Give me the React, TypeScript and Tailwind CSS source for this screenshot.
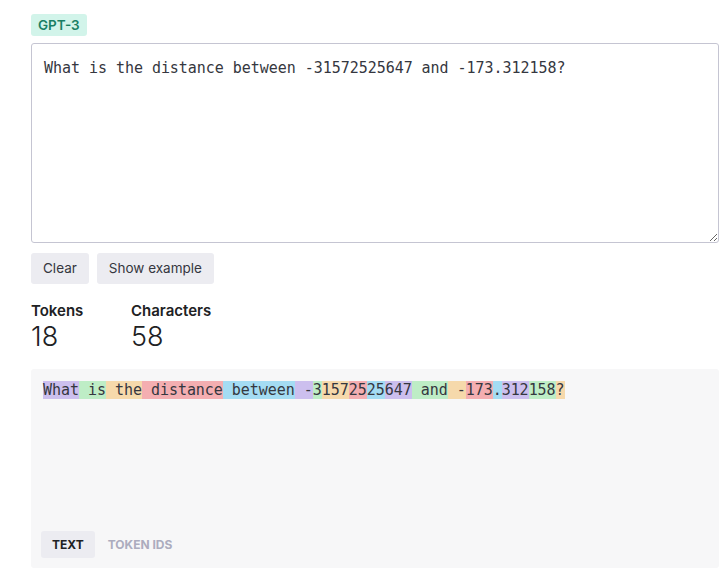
import React from "react";

const tokens = [
    "What", " is", " the", " distance", " between", " -", "3", "157", "25", "25", "647",
    " and", " -", "173", ".", "312", "158", "?",
];

const colors = [
    "bg-[rgba(107,64,216,0.3)]",
    "bg-[rgba(104,222,122,0.4)]",
    "bg-[rgba(244,172,54,0.4)]",
    "bg-[rgba(239,65,70,0.4)]",
    "bg-[rgba(39,181,234,0.4)]",
];

export default function App() {
    const [text, setText] = React.useState("What is the distance between -31572525647 and -173.312158?");
    const [tab, setTab] = React.useState("text");

    return (
        <div className="min-h-screen bg-white font-['Inter',sans-serif] text-[#353740]">
            <div className="pl-[31px] pt-[14px] w-[719px]">
                <div className="flex">
                    <div className="flex h-[22px] items-center rounded-[3px] bg-[#d2f4ea] px-[7px] text-[13.5px] font-semibold text-[#1a7f64]">
                        GPT-3
                    </div>
                </div>

                <textarea
                    className="mt-[7px] block h-[200px] w-[688px] rounded-[3px] border border-[#c5c5d2] bg-white px-[12px] py-[12px] font-['DejaVu_Sans_Mono',monospace] text-[15px] leading-[24px] tracking-[-0.04px] text-[#353740] outline-none"
                    value={text}
                    onChange={e => setText(e.target.value)}
                />

                <div className="mt-[10px] flex gap-[8px]">
                    <button className="h-[31px] rounded-[3px] bg-[#ececf1] px-[12px] text-[13.5px] text-[#353740]" onClick={() => setText("")}>
                        Clear
                    </button>
                    <button className="h-[31px] rounded-[3px] bg-[#ececf1] px-[12px] text-[13.5px] text-[#353740]">
                        Show example
                    </button>
                </div>

                <div className="mt-[17px] flex">
                    <div className="w-[100px]">
                        <div className="text-[15px] font-semibold leading-[20px] text-[#202123]">Tokens</div>
                        <div className="text-[27px] font-light leading-[32px] text-[#202123]">18</div>
                    </div>
                    <div>
                        <div className="text-[15px] font-semibold leading-[20px] text-[#202123]">Characters</div>
                        <div className="text-[27px] font-light leading-[32px] text-[#202123]">{text.length}</div>
                    </div>
                </div>

                <div className="mt-[16px] flex h-[199px] w-[688px] flex-col justify-between rounded-[3px] bg-[#f7f7f8] px-[12px] pb-[10px] pt-[12px]">
                    <div className="font-['DejaVu_Sans_Mono',monospace] text-[15px] leading-[18px] tracking-[-0.04px] text-[#353740] whitespace-pre">
                        {tokens.map((t, i) => (
                            <span key={i} className={colors[i % 5]}>{t}</span>
                        ))}
                    </div>
                    <div className="-ml-[2px] flex gap-[2px]">
                        <button
                            className={"h-[27px] rounded-[3px] px-[11px] text-[12px] font-bold " + (tab === "text" ? "bg-[#ececf1] text-[#202123]" : "text-[#acacbe]")}
                            onClick={() => setTab("text")}
                        >
                            TEXT
                        </button>
                        <button
                            className={"h-[27px] rounded-[3px] px-[11px] text-[12px] font-bold " + (tab === "ids" ? "bg-[#ececf1] text-[#202123]" : "text-[#acacbe]")}
                            onClick={() => setTab("ids")}
                        >
                            TOKEN IDS
                        </button>
                    </div>
                </div>
            </div>
        </div>
    );
}
